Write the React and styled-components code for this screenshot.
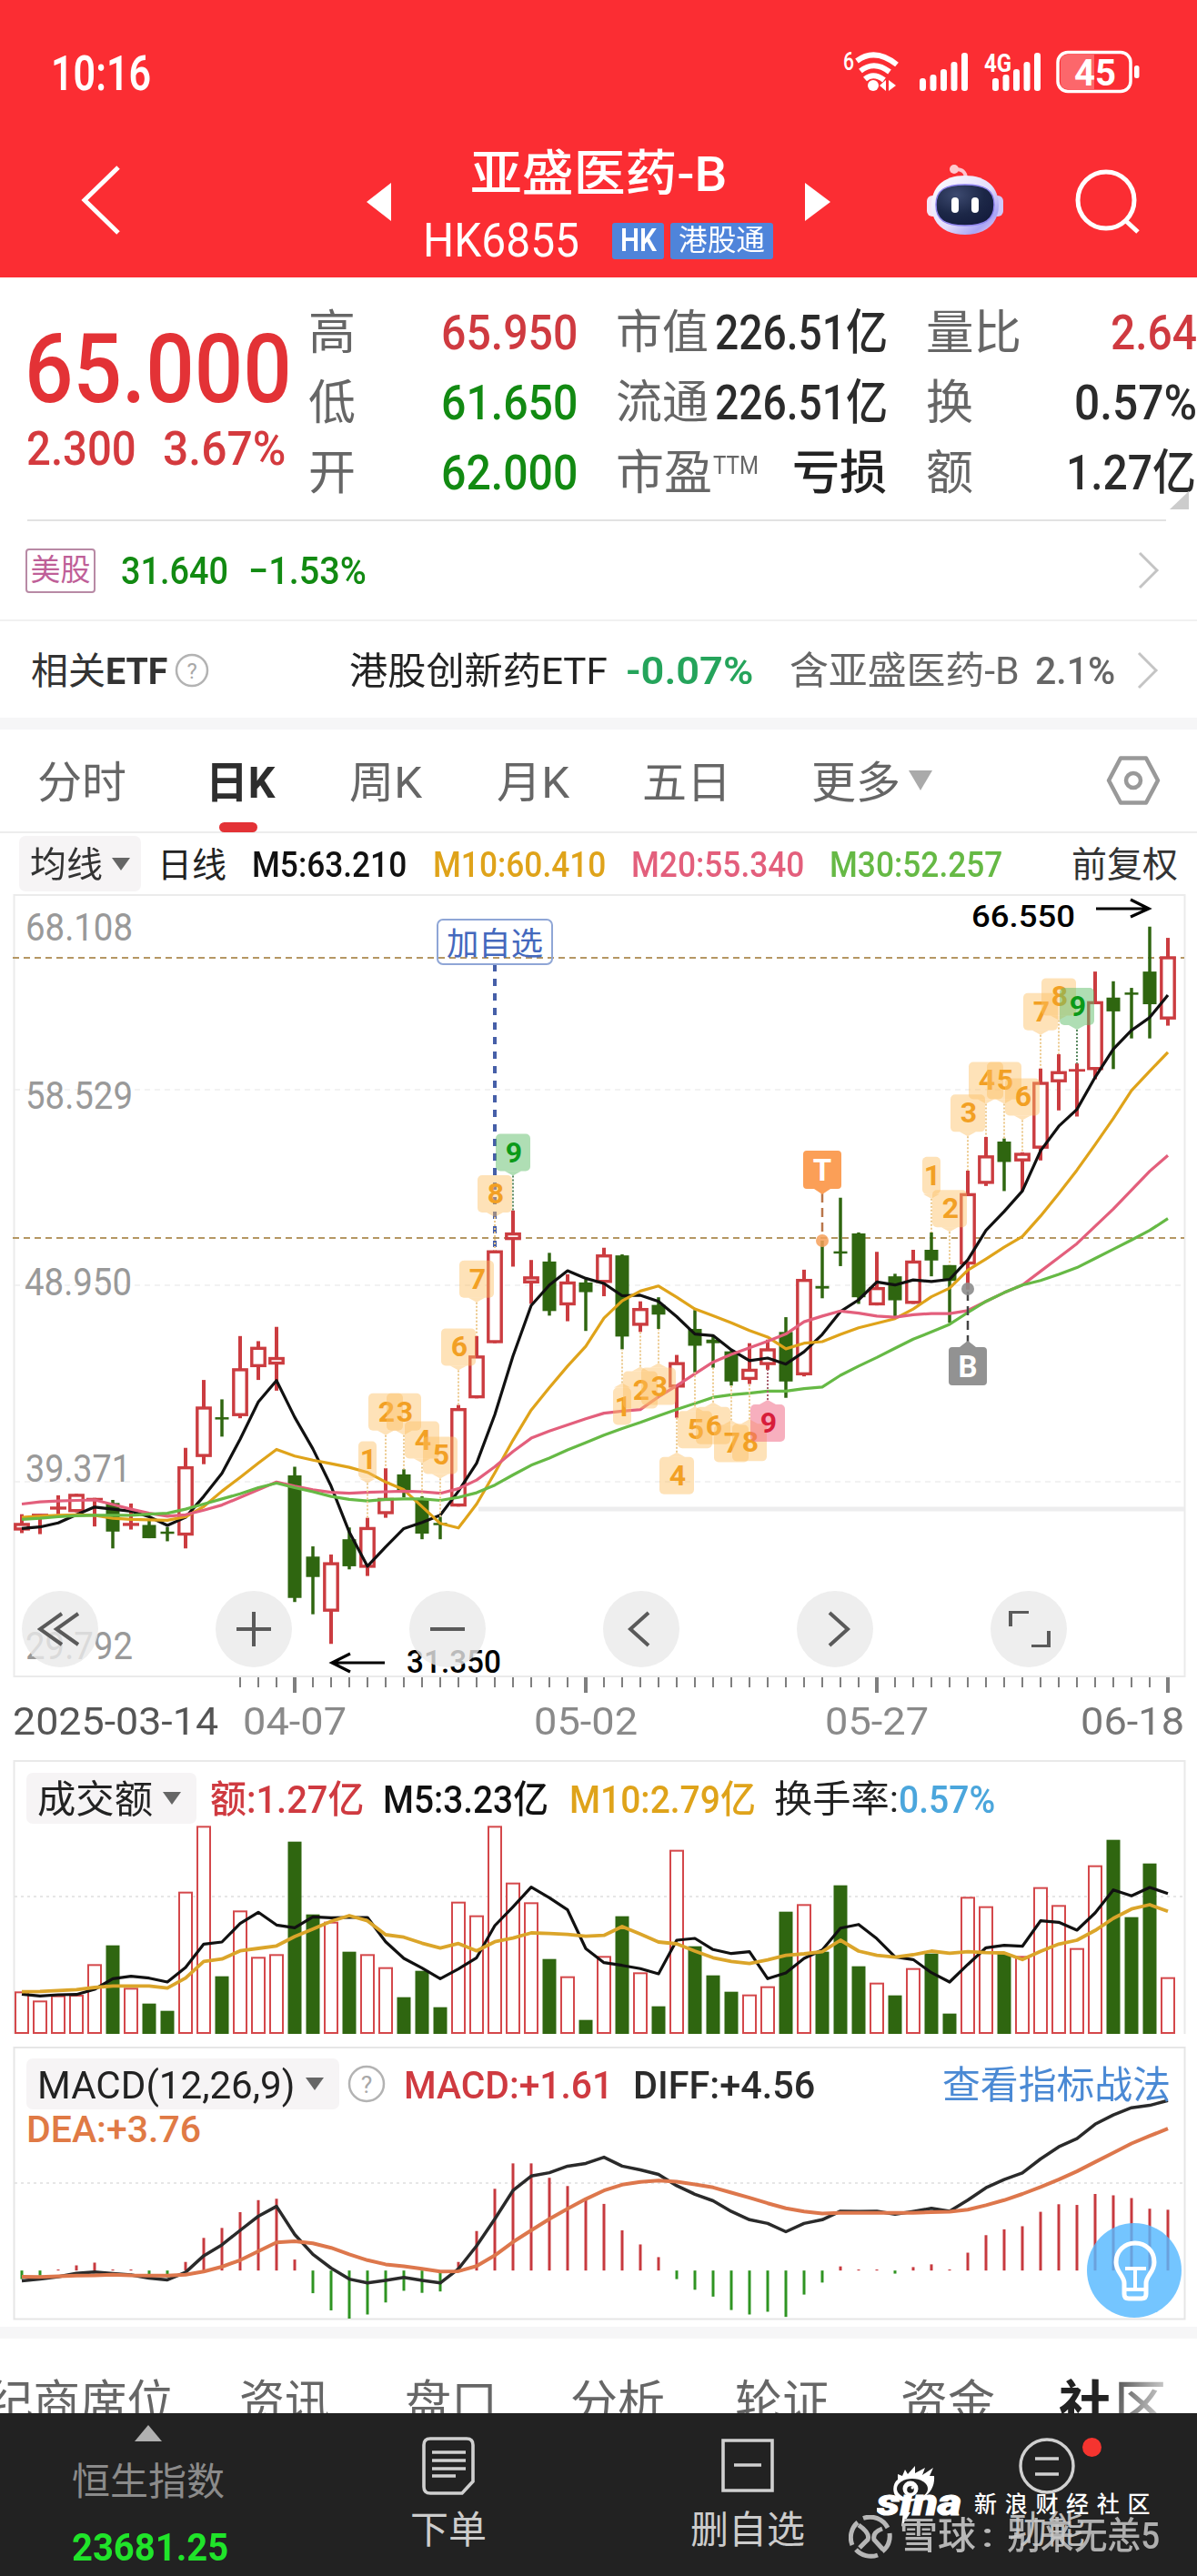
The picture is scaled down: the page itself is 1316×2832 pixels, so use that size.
import React, { useLayoutEffect, useRef, useState } from 'react';
import styled, { createGlobalStyle } from 'styled-components';

const RED = '#e33236';
const CANDLE_RED = '#cb3c40';
const CANDLE_GREEN = '#2f6610';
const GREEN = '#128a12';
const ORANGE = '#dfa31a';
const PINK = '#e35f7c';
const LIME = '#66b945';

// [high, body top, body bottom, low, direction]
const candles = [
    [1220, 1237, 1252, 1257, 'r'], [1220, 1219, 1222, 1259, 'r'], [1183, 1205, 1211, 1220, 'r'],
    [1180, 1180, 1216, 1216, 'r'], [1188, 1188, 1193, 1244, 'r'], [1192, 1198, 1254, 1287, 'g'],
    [1199, 1237, 1243, 1250, 'r'], [1233, 1241, 1267, 1267, 'g'], [1245, 1254, 1257, 1273, 'g'],
    [1090, 1126, 1262, 1287, 'r'], [957, 1009, 1108, 1122, 'r'], [995, 1030, 1033, 1068, 'g'],
    [871, 934, 1028, 1032, 'r'], [881, 892, 932, 957, 'r'], [853, 912, 927, 978, 'r'],
    [1127, 1144, 1384, 1392, 'g'], [1283, 1303, 1343, 1416, 'g'], [1299, 1314, 1411, 1474, 'r'],
    [1246, 1269, 1322, 1328, 'g'], [1227, 1245, 1325, 1341, 'r'], [1130, 1188, 1220, 1227, 'r'],
    [1132, 1142, 1175, 1187, 'g'], [1185, 1189, 1258, 1269, 'g'], [1225, 1237, 1241, 1269, 'g'],
    [1006, 1012, 1205, 1205, 'r'], [871, 909, 993, 993, 'r'], [703, 703, 885, 885, 'r'],
    [625, 668, 683, 735, 'r'], [722, 754, 768, 808, 'r'], [708, 725, 822, 831, 'g'],
    [750, 764, 811, 842, 'r'], [760, 766, 785, 861, 'g'], [698, 711, 767, 793, 'r'],
    [711, 713, 872, 897, 'g'], [803, 816, 851, 863, 'r'], [795, 810, 829, 857, 'g'],
    [908, 922, 972, 1031, 'r'], [820, 857, 890, 942, 'g'], [871, 878, 885, 933, 'g'],
    [900, 901, 960, 968, 'g'], [885, 935, 957, 965, 'r'], [878, 895, 928, 937, 'r'],
    [834, 863, 960, 992, 'g'], [741, 759, 948, 950, 'r'], [684, 773, 778, 797, 'g'],
    [600, 705, 709, 734, 'g'], [668, 670, 795, 808, 'g'], [706, 775, 811, 811, 'r'],
    [749, 754, 801, 834, 'g'], [702, 723, 808, 808, 'r'], [668, 702, 723, 754, 'g'],
    [732, 732, 763, 845, 'g'], [547, 591, 731, 780, 'r'], [481, 517, 573, 577, 'r'],
    [484, 490, 530, 587, 'g'], [511, 512, 529, 587, 'r'], [347, 373, 504, 527, 'r'],
    [319, 352, 374, 429, 'r'], [337, 348, 353, 441, 'r'], [157, 215, 350, 368, 'r'],
    [176, 208, 235, 348, 'g'], [189, 198, 201, 288, 'g'], [69, 157, 221, 288, 'g'],
    [91, 127, 251, 263, 'r'],
];

const ma5 = [1248, 1245, 1237, 1221, 1206, 1210, 1214, 1225, 1242, 1226, 1185, 1140, 1073, 1000, 958, 1030, 1092, 1165, 1255, 1322, 1284, 1248, 1236, 1222, 1175, 1120, 1025, 910, 811, 771, 743, 758, 768, 792, 791, 803, 833, 867, 870, 898, 919, 914, 926, 902, 868, 823, 800, 765, 771, 761, 764, 760, 722, 664, 627, 587, 508, 460, 427, 364, 309, 272, 247, 203];
const ma10 = [1226, 1224, 1222, 1221, 1222, 1228, 1230, 1231, 1232, 1225, 1205, 1175, 1148, 1120, 1093, 1106, 1114, 1121, 1128, 1138, 1157, 1172, 1205, 1238, 1247, 1200, 1139, 1075, 1016, 972, 930, 891, 836, 802, 783, 773, 795, 818, 831, 845, 860, 873, 896, 885, 882, 868, 855, 846, 837, 818, 794, 777, 742, 720, 697, 676, 636, 592, 546, 496, 445, 390, 352, 315];
const ma20 = [1200, 1196, 1194, 1193, 1192, 1201, 1210, 1218, 1224, 1221, 1212, 1202, 1187, 1172, 1157, 1165, 1172, 1177, 1179, 1177, 1176, 1175, 1176, 1179, 1170, 1153, 1127, 1097, 1071, 1057, 1045, 1033, 1022, 1018, 1015, 990, 968, 945, 922, 907, 894, 881, 867, 843, 832, 822, 826, 832, 834, 829, 827, 827, 821, 803, 786, 771, 744, 717, 690, 656, 622, 585, 548, 517];
const ma30 = [1230, 1228, 1225, 1223, 1222, 1222, 1222, 1220, 1218, 1210, 1200, 1190, 1180, 1168, 1159, 1168, 1176, 1185, 1191, 1194, 1191, 1190, 1190, 1193, 1187, 1178, 1163, 1143, 1124, 1110, 1094, 1080, 1065, 1052, 1040, 1027, 1015, 1003, 991, 986, 983, 979, 979, 974, 971, 948, 930, 913, 895, 877, 863, 848, 825, 803, 786, 771, 762, 750, 737, 719, 701, 683, 664, 641];

// [candle index, label, tag top, dotted line end, 'above' | 'below', tone]
const tags = [
    [19, '1', 1077, 1227, 'above'], [20, '2', 983, 1130, 'above'], [21, '3', 983, 1132, 'above'],
    [22, '4', 1038, 1185, 'above'], [23, '5', 1068, 1225, 'above'], [24, '6', 856, 1006, 'above'],
    [25, '7', 723, 871, 'above'], [26, '8', 556, 703, 'above'], [27, '9', 475, 625, 'above', 'green'],
    [33, '1', 972, 897, 'below'], [34, '2', 940, 863, 'below'], [35, '3', 933, 857, 'below'],
    [36, '4', 1108, 1031, 'below'], [37, '5', 1018, 942, 'below'], [38, '6', 1010, 933, 'below'],
    [39, '7', 1045, 968, 'below'], [40, '8', 1043, 965, 'below'], [41, '9', 1005, 937, 'below', 'red'],
    [50, '1', 520, 668, 'above'], [51, '2', 585, 732, 'above'], [52, '3', 398, 547, 'above'],
    [53, '4', 334, 481, 'above'], [54, '5', 334, 484, 'above'], [55, '6', 366, 511, 'above'],
    [56, '7', 199, 347, 'above'], [57, '8', 170, 319, 'above'], [58, '9', 189, 337, 'above', 'green'],
];

const tones = {
    amber: { bg: 'rgba(253,190,98,0.45)', fg: '#f2a024', line: '#ecc98d' },
    green: { bg: 'rgba(95,190,105,0.5)', fg: '#0b9a18', line: '#5b8a62' },
    red: { bg: 'rgba(240,95,125,0.5)', fg: '#d81e3a', line: '#a8606f' },
};

const volumes = [1232, 1262, 1245, 1243, 1142, 1077, 1220, 1269, 1293, 903, 686, 1179, 965, 1118, 1109, 735, 975, 1002, 1098, 1109, 1152, 1248, 1161, 1281, 936, 981, 686, 873, 938, 1122, 1182, 1323, 1115, 981, 1169, 1278, 765, 1080, 1176, 1230, 1242, 1215, 966, 944, 1098, 879, 1146, 1203, 1242, 1155, 1104, 1302, 920, 951, 1105, 1115, 888, 947, 1089, 816, 729, 984, 807, 1185];
const greenVolumes = [5, 7, 8, 11, 15, 16, 18, 21, 22, 23, 29, 31, 33, 35, 37, 38, 39, 42, 44, 45, 46, 48, 50, 51, 54, 60, 61, 62];
const vol5 = [1238, 1244, 1240, 1239, 1222, 1187, 1179, 1185, 1198, 1150, 1073, 1066, 1005, 968, 1010, 1019, 983, 986, 985, 985, 1065, 1120, 1152, 1187, 1155, 1118, 1012, 950, 885, 920, 960, 1088, 1134, 1143, 1154, 1171, 1060, 1054, 1091, 1104, 1098, 1187, 1168, 1120, 1092, 1020, 1008, 1055, 1115, 1124, 1167, 1198, 1140, 1085, 1077, 1080, 996, 1001, 1027, 970, 894, 914, 886, 906];
const vol10 = [1230, 1229, 1226, 1223, 1216, 1211, 1211, 1211, 1218, 1185, 1130, 1122, 1095, 1087, 1079, 1048, 1023, 998, 979, 996, 1042, 1050, 1070, 1086, 1071, 1095, 1065, 1053, 1036, 1038, 1041, 1047, 1044, 1015, 1040, 1066, 1072, 1096, 1118, 1130, 1137, 1125, 1110, 1105, 1098, 1060, 1096, 1110, 1116, 1108, 1096, 1103, 1098, 1101, 1102, 1124, 1097, 1073, 1060, 1028, 988, 957, 943, 965];

const macdBars = [705, 695, 677, 665, 657, 677, 677, 700, 700, 655, 585, 556, 510, 475, 471, 648, 746, 796, 820, 808, 773, 739, 745, 741, 655, 565, 442, 368, 368, 410, 434, 470, 486, 563, 604, 641, 705, 736, 756, 795, 808, 800, 815, 750, 715, 668, 677, 677, 689, 670, 662, 677, 628, 577, 560, 551, 509, 487, 489, 457, 461, 469, 500, 503];
const diff = [710, 705, 698, 688, 684, 689, 693, 702, 707, 685, 637, 605, 563, 522, 493, 575, 633, 673, 705, 716, 709, 700, 709, 716, 675, 608, 530, 447, 405, 395, 376, 368, 350, 376, 387, 400, 433, 458, 477, 508, 532, 543, 567, 543, 532, 507, 508, 507, 516, 508, 499, 507, 475, 439, 415, 396, 355, 320, 296, 254, 227, 206, 199, 185];
const dea = [698, 699, 697, 695, 694, 692, 694, 695, 695, 692, 683, 669, 650, 624, 598, 595, 601, 614, 633, 650, 662, 668, 675, 683, 682, 667, 636, 597, 563, 530, 500, 472, 447, 430, 422, 418, 421, 429, 438, 453, 468, 484, 499, 508, 514, 512, 512, 512, 512, 512, 510, 509, 503, 490, 475, 457, 437, 415, 391, 364, 337, 310, 288, 267];

// level -> px inside each chart
const px = (i) => 24 + i * 20;
const priceY = (v) => (v * 880) / 1568;
const volY = (v) => (v - 466) / 3;
const macdY = (v) => (v - 28) / 2.6486;
const toPoints = (list, scale) => list.map((v, i) => `${px(i)},${scale(v).toFixed(1)}`).join(' ');

// Squeezes or stretches a label to the width of its column
function Fit({ w, children, ...rest }) {
    const ref = useRef(null);
    const [ratio, setRatio] = useState(1);

    useLayoutEffect(() => {
        setRatio(w / ref.current.offsetWidth);
    }, [w, children]);

    return (
        <Label $w={w} {...rest}>
            <span ref={ref} style={{ transform: `scaleX(${ratio})` }}>{children}</span>
        </Label>
    );
}

function ChartText({ x, y, w, size = 42, fill = '#999', weight = 400, children }) {
    return (
        <text x={x} y={y} fontSize={size} fill={fill} fontWeight={weight} textLength={w} lengthAdjust="spacingAndGlyphs">
            {children}
        </text>
    );
}

function SignalBars({ offset }) {
    return [85, 81, 75, 67, 57].map((top, i) => (
        <rect key={top} x={offset + i * 11.5} y={top - 50} width="7" height={99 - top} rx="3.2" fill="#fff" />
    ));
}

function StatusIcons() {
    return (
        <svg width="336" height="60" viewBox="0 0 336 60">
            <text x="1" y="26" fontSize="27" fontWeight="500" fill="#fff" textLength="12" lengthAdjust="spacingAndGlyphs">6</text>
            <g fill="none" stroke="#fff" strokeWidth="6">
                <path d="M16 16 Q36 1 60 20" />
                <path d="M20 27 Q35 15 52 28" />
                <path d="M25 36 Q34 28 46 37" />
            </g>
            <circle cx="34" cy="43" r="6" fill="#fff" />
            <path d="M41 43 L48 37 V49Z M51 37 L59 43 L51 49Z" fill="#fff" />
            <SignalBars offset={85} />
            <text x="156" y="28" fontSize="28" fontWeight="700" fill="#fff" textLength="30" lengthAdjust="spacingAndGlyphs">4G</text>
            <SignalBars offset={165} />
            <rect x="237" y="6.500" width="80" height="43" rx="11" fill="none" stroke="#fff" strokeWidth="3.500" />
            <path d="M248 9 H277 V47 H248 Q240 47 240 39 V17 Q240 9 248 9Z" fill="rgba(255,255,255,0.28)" />
            <text x="255" y="43" fontSize="40" fontWeight="700" fill="#fff" textLength="46" lengthAdjust="spacingAndGlyphs">45</text>
            <rect x="321" y="21" width="5.500" height="14" rx="2.500" fill="#fff" />
        </svg>
    );
}

function Robot() {
    return (
        <svg width="90" height="84" viewBox="0 0 90 84">
            <defs>
                <linearGradient id="shell" x1="0" y1="0" x2="1" y2="1">
                    <stop offset="0" stopColor="#fff" />
                    <stop offset="0.55" stopColor="#e3dcfb" />
                    <stop offset="0.8" stopColor="#a9a5f5" />
                    <stop offset="1" stopColor="#fbd5ea" />
                </linearGradient>
                <radialGradient id="visor" cx="0.35" cy="0.25" r="0.8">
                    <stop offset="0" stopColor="#3d4a70" />
                    <stop offset="0.6" stopColor="#1c2747" />
                    <stop offset="1" stopColor="#141c3d" />
                </radialGradient>
            </defs>
            <path d="M33 6 Q46 5 46 17" fill="none" stroke="#fdc5cf" strokeWidth="4" />
            <circle cx="33" cy="6" r="5" fill="#ffc9cf" />
            <rect x="3" y="35" width="14" height="23" rx="6" fill="#f6e4f6" />
            <rect x="73" y="35" width="14" height="23" rx="6" fill="#cfc8fa" />
            <path d="M45 13 C69 13 82 26 82 46 C82 66 67 78 45 78 C23 78 8 66 8 46 C8 26 21 13 45 13Z" fill="url(#shell)" />
            <path d="M45 23 C67 23 77 29 77 45 C77 62 66 68 45 68 C23 68 13 62 13 45 C13 29 23 23 45 23Z" fill="url(#visor)" stroke="#8f83ee" strokeWidth="1.500" />
            <rect x="30" y="37" width="8" height="17" rx="4" fill="#fff" />
            <rect x="52" y="37" width="8" height="17" rx="4" fill="#fff" />
        </svg>
    );
}

function Chevron() {
    return (
        <svg width="24" height="42" viewBox="0 0 24 42" fill="none" stroke="#c4c4c4" strokeWidth="3">
            <path d="M2 2 L21 21 L2 40" />
        </svg>
    );
}

function Help({ r }) {
    return (
        <svg width="44" height="44" viewBox="0 0 44 44">
            <circle cx="22" cy="22" r={r} fill="none" stroke="#b3b3b3" strokeWidth="2.500" />
            <text x="22" y={22 + r * 0.5} fontSize={r * 1.4} fill="#a8a8a8" textAnchor="middle">?</text>
        </svg>
    );
}

function Tag({ index, label, top, end, side, tone = 'amber' }) {
    const { bg, fg, line } = tones[tone];
    const width = label === '1' ? 20 : 38;
    const x = px(index);
    const y = priceY(top);
    const bottom = y + 41;
    const pointer = side === 'above'
        ? `M${x - 9} ${bottom} L${x} ${bottom + 5} L${x + 9} ${bottom}Z`
        : `M${x - 9} ${y} L${x} ${y - 5} L${x + 9} ${y}Z`;

    return (
        <g>
            <line x1={x} x2={x} y1={side === 'above' ? bottom + 5 : y - 5} y2={priceY(end)} stroke={line} strokeWidth="2" strokeDasharray="2 2" />
            <rect x={x - width / 2} y={y} width={width} height="41" rx="5" fill={bg} />
            <path d={pointer} fill={bg} />
            <text x={x + 1} y={y + 31} fontSize="32" fontWeight="700" fill={fg} textAnchor="middle">{label}</text>
        </g>
    );
}

function PriceChart() {
    return (
        <ChartSvg width="1316" height="880" viewBox="0 0 1316 880">
            <rect x="15.500" y="4" width="1287" height="859" fill="none" stroke="#ebebeb" strokeWidth="2" />
            {[218, 433, 649].map((y) => (
                <line key={y} x1="16" x2="1302" y1={y} y2={y} stroke="#eee" strokeWidth="1.500" strokeDasharray="6 5" />
            ))}
            <line x1="526" x2="1302" y1="679" y2="679" stroke="#ededee" strokeWidth="5" />
            {[73, 381].map((y) => (
                <line key={y} x1="14" x2="1302" y1={y} y2={y} stroke="#b59763" strokeWidth="2" strokeDasharray="7 5" />
            ))}

            <ChartText x={28} y={54} w={118}>68.108</ChartText>
            <ChartText x={28} y={239} w={118}>58.529</ChartText>
            <ChartText x={27} y={444} w={118}>48.950</ChartText>
            <ChartText x={28} y={649} w={116}>39.371</ChartText>
            <ChartText x={28} y={844} w={118}>29.792</ChartText>

            <line x1="544" x2="544" y1="80" y2="391" stroke="#465fa8" strokeWidth="4" strokeDasharray="8 8" />

            {candles.map(([high, top, bottom, low, dir], i) => {
                const up = dir === 'r';
                const color = up ? CANDLE_RED : CANDLE_GREEN;
                const x = px(i);
                const flat = bottom - top < 9;
                const y = priceY(top);
                const h = Math.max(priceY(bottom) - y, 2.5);
                return (
                    <g key={i}>
                        <line x1={x} x2={x} y1={priceY(high)} y2={priceY(low)} stroke={color} strokeWidth={up ? 4 : 3.5} />
                        {up && !flat
                            ? <rect x={x - 7.2} y={y + 1.7} width="14.400" height={Math.max(h - 3.4, 3)} fill="#fff" stroke={color} strokeWidth="3.400" />
                            : <rect x={x - (up ? 9 : 7.5)} y={y} width={up ? 18 : 15} height={h} fill={color} />}
                    </g>
                );
            })}

            <g fill="none" strokeWidth="3.200" strokeLinejoin="round">
                <polyline points={toPoints(ma5, priceY)} stroke="#111" />
                <polyline points={toPoints(ma10, priceY)} stroke={ORANGE} />
                <polyline points={toPoints(ma20, priceY)} stroke={PINK} />
                <polyline points={toPoints(ma30, priceY)} stroke={LIME} />
            </g>

            {tags.map(([index, label, top, end, side, tone]) => (
                <Tag key={`${index}${label}`} index={index} label={label} top={top} end={end} side={side} tone={tone} />
            ))}

            <rect x="481" y="31" width="126" height="49" rx="6" fill="none" stroke="#8fa6d6" strokeWidth="2" />
            <ChartText x={491} y={70} w={106} size={35} fill="#4468bd">加自选</ChartText>

            <line x1="904" x2="904" y1="332" y2="378" stroke="#b9764a" strokeWidth="2.500" strokeDasharray="10 6" />
            <circle cx="904" cy="384" r="7" fill="#f6a05a" opacity="0.85" />
            <path d="M887 285 H921 Q925 285 925 289 V323 Q925 327 921 327 H913 L904 333 L895 327 H887 Q883 327 883 323 V289 Q883 285 887 285Z" fill="#fb9f57" />
            <text x="904" y="318" fontSize="33" fontWeight="700" fill="#fff" textAnchor="middle">T</text>

            <line x1="1064" x2="1064" y1="440" y2="496" stroke="#444" strokeWidth="2.500" strokeDasharray="10 6" />
            <circle cx="1064" cy="437" r="7" fill="#8c8c8c" opacity="0.9" />
            <path d="M1047 501 H1055 L1064 494 L1073 501 H1081 Q1085 501 1085 505 V539 Q1085 543 1081 543 H1047 Q1043 543 1043 539 V505 Q1043 501 1047 501Z" fill="#929292" />
            <text x="1064" y="534" fontSize="33" fontWeight="700" fill="#fff" textAnchor="middle">B</text>

            <ChartText x={1068} y={39} w={114} size={34} fill="#000" weight={500}>66.550</ChartText>
            <path d="M1205 19 H1262 M1243 9 L1263 19 L1243 28" fill="none" stroke="#000" strokeWidth="3.200" />
            <ChartText x={447} y={859} w={104} size={35} fill="#000" weight={500}>31.350</ChartText>
            <path d="M423 848 H365 M385 838 L365 848 L385 858" fill="none" stroke="#000" strokeWidth="3.200" />

            {candles.map((_, i) => i > 11 && (
                <line key={i} x1={px(i)} x2={px(i)} y1="864" y2={(i - 15) % 16 === 0 ? 881 : 875} stroke="#7f7f7f" strokeWidth={(i - 15) % 16 === 0 ? 4 : 2} />
            ))}
        </ChartSvg>
    );
}

function VolumeChart() {
    return (
        <ChartSvg width="1316" height="304" viewBox="0 0 1316 304">
            <path d="M15.500 301 V1 H1302.500 V301" fill="none" stroke="#e9e9e9" strokeWidth="2" />
            <line x1="16" x2="1302" y1="150" y2="150" stroke="#dedede" strokeWidth="1.500" strokeDasharray="3 4" />
            {volumes.map((v, i) => {
                const green = greenVolumes.includes(i);
                const y = volY(v);
                return green
                    ? <rect key={i} x={px(i) - 7.5} y={y} width="15" height={301 - y} fill={CANDLE_GREEN} />
                    : <rect key={i} x={px(i) - 7} y={y} width="14" height={300 - y} fill="#fff" stroke="#d4484b" strokeWidth="2" />;
            })}
            <g fill="none" strokeWidth="3.200" strokeLinejoin="round">
                <polyline points={toPoints(vol5, volY)} stroke="#111" />
                <polyline points={toPoints(vol10, volY)} stroke="#dba52a" strokeWidth="3.800" />
            </g>
        </ChartSvg>
    );
}

function MacdChart() {
    const zero = macdY(680);
    return (
        <ChartSvg width="1316" height="304" viewBox="0 0 1316 304">
            <rect x="15.500" y="1" width="1287" height="298.500" fill="none" stroke="#e6e6e6" strokeWidth="2" />
            <line x1="16" x2="1302" y1="150" y2="150" stroke="#dedede" strokeWidth="1.500" strokeDasharray="3 4" />
            {macdBars.map((v, i) => (
                <line key={i} x1={px(i)} x2={px(i)} y1={zero} y2={macdY(v)} stroke={v < 680 ? '#c73a3f' : '#2f9422'} strokeWidth="3" />
            ))}
            <g fill="none" strokeWidth="3.500" strokeLinejoin="round">
                <polyline points={toPoints(diff, macdY)} stroke="#2a2a2a" />
                <polyline points={toPoints(dea, macdY)} stroke="#dd774c" strokeWidth="4" />
            </g>
        </ChartSvg>
    );
}

const buttonIcons = [
    'M27 3 L3 20 L27 37 M45 3 L21 20 L45 37',
    'M6 20 H44 M25 1 V39',
    'M6 20 H44',
    'M33 2 L13 20 L33 38',
    'M19 2 L39 20 L19 38',
    'M5 17 V1 H25 M47 22 V39 H28',
];

function App() {
    return (
        <>
            <GlobalStyle />
            <Page>
                <StatusBar>
                    <Fit w={110} $size={54} $weight={600} $color="#fff">10:16</Fit>
                    <StatusIcons />
                </StatusBar>
                <Nav>
                    <Slot $gap={88}>
                        <svg width="46" height="80" viewBox="0 0 46 80" fill="none" stroke="#fff" strokeWidth="5">
                            <path d="M42 2 L5 38 L42 74" />
                        </svg>
                    </Slot>
                    <Slot $gap={269}>
                        <svg width="27" height="42"><path d="M27 0 V42 L0 21Z" fill="#fff" /></svg>
                    </Slot>
                    <Titles>
                        <TitleLine $drop={5}><Fit w={282} $size={54} $weight={500} $color="#fff">亚盛医药-B</Fit></TitleLine>
                        <TitleLine>
                            <Fit w={172} $size={51} $color="#fff">HK6855</Fit>
                            <Badge $gap={36} $w={57}><Fit w={40} $size={35} $weight={600} $color="#fff">HK</Fit></Badge>
                            <Badge $gap={7} $w={113}><Fit w={95} $size={32} $color="#fff">港股通</Fit></Badge>
                        </TitleLine>
                    </Titles>
                    <Slot $gap={0}>
                        <svg width="28" height="42"><path d="M0 0 V42 L28 21Z" fill="#fff" /></svg>
                    </Slot>
                    <Slot $gap={103}><Robot /></Slot>
                    <Slot $gap={76}>
                        <svg width="76" height="72" viewBox="0 0 76 72" fill="none" stroke="#fff" strokeWidth="5">
                            <circle cx="34" cy="34" r="31" />
                            <path d="M56 57 L69 69" />
                        </svg>
                    </Slot>
                </Nav>

                <Quote>
                    <Price>
                        <Fit w={294} $size={106} $weight={500} $color={RED}>65.000</Fit>
                        <PriceChange>
                            <Fit w={121} $size={52} $weight={500} $color="#d43a3e">2.300</Fit>
                            <Fit w={135} $gap={29} $size={52} $weight={500} $color="#d43a3e">3.67%</Fit>
                        </PriceChange>
                    </Price>
                    <Stats>
                        <StatRow>
                            <Fit w={52} $size={52} $color="#666">高</Fit>
                            <Fit w={150} $gap={94} $size={53} $weight={500} $color="#cf3a40">65.950</Fit>
                            <Fit w={102} $gap={42} $size={51} $color="#666">市值</Fit>
                            <Fit w={190} $gap={7} $size={53} $weight={500} $color="#2b2b2b">226.51亿</Fit>
                            <Fit w={105} $gap={42} $size={52} $color="#666">量比</Fit>
                            <Fit w={95} $gap={98} $size={53} $weight={500} $color="#cf3a40">2.64</Fit>
                        </StatRow>
                        <StatRow>
                            <Fit w={52} $size={52} $color="#666">低</Fit>
                            <Fit w={150} $gap={94} $size={53} $weight={500} $color={GREEN}>61.650</Fit>
                            <Fit w={102} $gap={42} $size={51} $color="#666">流通</Fit>
                            <Fit w={190} $gap={7} $size={53} $weight={500} $color="#2b2b2b">226.51亿</Fit>
                            <Fit w={52} $gap={42} $size={52} $color="#666">换</Fit>
                            <Fit w={135} $gap={111} $size={53} $weight={500} $color="#2b2b2b">0.57%</Fit>
                        </StatRow>
                        <StatRow>
                            <Fit w={52} $size={52} $color="#666">开</Fit>
                            <Fit w={150} $gap={94} $size={53} $weight={500} $color={GREEN}>62.000</Fit>
                            <Fit w={106} $gap={42} $size={52} $color="#666">市盈</Fit>
                            <Fit w={50} $gap={1} $size={28} $raise={8} $color="#666">TTM</Fit>
                            <Fit w={104} $gap={37} $size={52} $weight={500} $color="#222">亏损</Fit>
                            <Fit w={52} $gap={43} $size={52} $color="#666">额</Fit>
                            <Fit w={143} $gap={102} $size={53} $weight={500} $color="#2b2b2b">1.27亿</Fit>
                        </StatRow>
                    </Stats>
                    <Corner />
                </Quote>

                <UsRow>
                    <UsBadge><Fit w={66} $size={33} $color="#bf5f98">美股</Fit></UsBadge>
                    <Fit w={118} $gap={28} $size={42} $weight={500} $color={GREEN}>31.640</Fit>
                    <Fit w={130} $gap={22} $size={42} $weight={500} $color={GREEN}>−1.53%</Fit>
                    <Push><Chevron /></Push>
                </UsRow>

                <EtfRow>
                    <Fit w={82} $size={41} $color="#333">相关</Fit>
                    <Fit w={68} $size={41} $weight={700} $color="#333">ETF</Fit>
                    <HelpSlot $gap={5}><Help r={17} /></HelpSlot>
                    <Fit w={284} $gap={151} $size={41} $color="#222">港股创新药ETF</Fit>
                    <Fit w={140} $gap={20} $size={42} $weight={600} $color="#25a45b">-0.07%</Fit>
                    <Fit w={253} $gap={40} $size={42} $color="#666">含亚盛医药-B</Fit>
                    <Fit w={88} $gap={17} $size={42} $weight={500} $color="#666">2.1%</Fit>
                    <Push><Chevron /></Push>
                </EtfRow>
                <Divider />

                <Tabs>
                    <Fit w={98} $gap={41} $size={48} $color="#666">分时</Fit>
                    <Fit w={77} $gap={87} $size={48} $weight={700} $color="#2e2e2e">日K</Fit>
                    <Fit w={80} $gap={81} $size={48} $color="#666">周K</Fit>
                    <Fit w={80} $gap={82} $size={48} $color="#666">月K</Fit>
                    <Fit w={98} $gap={80} $size={48} $color="#666">五日</Fit>
                    <Fit w={98} $gap={88} $size={48} $color="#666">更多</Fit>
                    <Caret $gap={9} $size={13} $tall={22} $color="#aaa" />
                    <HexSlot>
                        <svg width="60" height="54" viewBox="0 0 60 54" fill="none" stroke="#999" strokeWidth="4.500" strokeLinejoin="round">
                            <path d="M16 2.500 H44 L57 27 L44 51.500 H16 L3 27Z" />
                            <circle cx="30" cy="27" r="8" />
                        </svg>
                    </HexSlot>
                    <ActiveMark />
                </Tabs>

                <Legend>
                    <Chip $w={134} $h={61}>
                        <Fit w={80} $size={39} $color="#333">均线</Fit>
                        <Caret $gap={10} $size={10} $tall={14} $color="#666" />
                    </Chip>
                    <Fit w={76} $gap={18} $size={38} $color="#222">日线</Fit>
                    <Fit w={170} $gap={28} $size={39} $weight={500} $color="#111">M5:63.210</Fit>
                    <Fit w={190} $gap={29} $size={39} $weight={500} $color={ORANGE}>M10:60.410</Fit>
                    <Fit w={190} $gap={28} $size={39} $weight={500} $color={PINK}>M20:55.340</Fit>
                    <Fit w={190} $gap={28} $size={39} $weight={500} $color={LIME}>M30:52.257</Fit>
                    <Fit w={117} $gap={76} $size={39} $color="#333">前复权</Fit>
                </Legend>

                <PricePanel>
                    <PriceChart />
                    <ChartButtons>
                        {buttonIcons.map((d) => (
                            <RoundButton key={d}>
                                <svg width="50" height="40" viewBox="0 0 50 40" fill="none" stroke="#5a5a5a" strokeWidth="4">
                                    <path d={d} />
                                </svg>
                            </RoundButton>
                        ))}
                    </ChartButtons>
                </PricePanel>

                <Dates>
                    <Fit w={226} $size={42} $color="#555">2025-03-14</Fit>
                    <Fit w={114} $gap={27} $size={42} $color="#8a8a8a">04-07</Fit>
                    <Fit w={114} $gap={206} $size={42} $color="#8a8a8a">05-02</Fit>
                    <Fit w={114} $gap={206} $size={42} $color="#8a8a8a">05-27</Fit>
                    <Fit w={114} $gap={167} $size={42} $color="#777">06-18</Fit>
                </Dates>

                <VolumePanel>
                    <VolumeChart />
                    <PanelHead $top={14}>
                        <Chip $w={187} $h={56}>
                            <Fit w={127} $size={42} $color="#222">成交额</Fit>
                            <Caret $gap={11} $size={10} $tall={14} $color="#666" />
                        </Chip>
                        <Fit w={169} $gap={15} $size={42} $weight={500} $color="#cf3a40">额:1.27亿</Fit>
                        <Fit w={182} $gap={21} $size={42} $weight={500} $color="#111">M5:3.23亿</Fit>
                        <Fit w={205} $gap={23} $size={42} $weight={500} $color={ORANGE}>M10:2.79亿</Fit>
                        <Fit w={137} $gap={20} $size={41} $color="#222">换手率:</Fit>
                        <Fit w={106} $size={42} $weight={500} $color="#4ba6dc">0.57%</Fit>
                    </PanelHead>
                </VolumePanel>

                <MacdPanel>
                    <MacdChart />
                    <PanelHead $top={13}>
                        <Chip $w={344} $h={56}>
                            <Fit w={283} $size={43} $color="#222">MACD(12,26,9)</Fit>
                            <Caret $gap={12} $size={10} $tall={14} $color="#666" />
                        </Chip>
                        <HelpSlot $gap={8}><Help r={19} /></HelpSlot>
                        <Fit w={230} $gap={19} $size={42} $weight={500} $color="#cf3a40">MACD:+1.61</Fit>
                        <Fit w={200} $gap={22} $size={42} $weight={500} $color="#2b2b2b">DIFF:+4.56</Fit>
                        <Fit w={251} $gap={140} $size={42} $color="#4a89d4">查看指标战法</Fit>
                    </PanelHead>
                    <DeaLine><Fit w={192} $size={41} $weight={500} $color="#e07a45">DEA:+3.76</Fit></DeaLine>
                    <BulbButton>
                        <svg width="104" height="104" viewBox="0 0 104 104" fill="none" stroke="#fff" strokeWidth="5" strokeLinejoin="round">
                            <path d="M41 78 V66 C41 58 32 54 32 43 C32 31 41 22 53 22 C65 22 74 31 74 43 C74 54 65 58 65 66 V78 Q65 83 60 83 H46 Q41 83 41 78Z" />
                            <path d="M41 73 H65 M53 73 V50 M42 50 H65" strokeWidth="4" />
                        </svg>
                    </BulbButton>
                </MacdPanel>
                <Divider />

                <SectionTabs>
                    <Fit w={206} $gap={-15} $size={51} $color="#666">纪商席位</Fit>
                    <Fit w={100} $gap={72} $size={51} $color="#666">资讯</Fit>
                    <Fit w={102} $gap={82} $size={51} $color="#666">盘口</Fit>
                    <Fit w={104} $gap={80} $size={51} $color="#666">分析</Fit>
                    <Fit w={104} $gap={77} $size={51} $color="#666">轮证</Fit>
                    <Fit w={104} $gap={78} $size={51} $color="#666">资金</Fit>
                    <Fit w={58} $gap={70} $size={58} $weight={700} $color="#222">社</Fit>
                    <FadedTab>区</FadedTab>
                </SectionTabs>

                <BottomBar>
                    <IndexCell>
                        <UpCaret />
                        <Fit w={168} $size={42} $color="#8b8b8b">恒生指数</Fit>
                        <Fit w={172} $size={43} $weight={700} $color="#20e42a">23681.25</Fit>
                    </IndexCell>
                    <ActionCell $left={430} $w={126}>
                        <svg width="60" height="66" viewBox="0 0 60 66" fill="none" stroke="#d0d0d0" strokeWidth="3.600">
                            <path d="M10 3 H50 Q57 3 57 10 V50 L45 63 H10 Q3 63 3 56 V10 Q3 3 10 3Z M12 18 H49 M12 27 H49 M12 36 H49 M12 44 H38" />
                        </svg>
                        <Fit w={84} $size={42} $color="#ccc">下单</Fit>
                    </ActionCell>
                    <ActionCell $left={759} $w={126}>
                        <svg width="60" height="66" viewBox="0 0 60 66" fill="none" stroke="#d0d0d0" strokeWidth="3.600">
                            <path d="M3 5 H57 V60 H3Z M15 32 H45" />
                        </svg>
                        <Fit w={126} $size={42} $color="#ccc">删自选</Fit>
                    </ActionCell>
                    <ActionCell $left={1088} $w={126}>
                        <svg width="62" height="66" viewBox="0 0 62 66" fill="none" stroke="#d0d0d0" strokeWidth="3.400">
                            <circle cx="31" cy="33" r="29" />
                            <path d="M18 25 H44 M18 42 H44" />
                        </svg>
                        <Fit w={84} $size={42} $color="#bbb">功能</Fit>
                        <RedDot />
                    </ActionCell>
                    <SinaMark>
                        <svg width="100" height="74" viewBox="0 0 100 74">
                            <path d="M24 38 C16 32 17 20 23 16 L23 10 L28 12 L31 5 L34 10 L42 1 L42 9 L53 3 L50 11 L62 3 L58 12 L63 12 C64 24 58 33 48 37 C40 41 30 41 24 38Z" fill="#fff" />
                            <ellipse cx="39" cy="26" rx="17" ry="11" fill="#222" />
                            <circle cx="37" cy="26" r="8.500" fill="#fff" />
                            <circle cx="37" cy="27" r="3.800" fill="#222" />
                            <circle cx="39" cy="25" r="1.500" fill="#fff" />
                            <text x="0" y="55" fontSize="40" fontWeight="900" fontStyle="italic" fill="#fff" stroke="#fff" textLength="93" lengthAdjust="spacingAndGlyphs">sına</text>
                            <path d="M29 52 H37 L27 68 Z" fill="#fff" />
                        </svg>
                        <SinaText>新浪财经社区</SinaText>
                    </SinaMark>
                    <XueqiuMark>
                        <svg width="48" height="48" viewBox="0 0 48 48" fill="none" stroke="#b7b7b7" strokeWidth="5">
                            <path d="M16 3.500 A22 22 0 0 1 43 14 M45 20 A22 22 0 0 1 37 40 M32 44 A22 22 0 0 1 8 38 M4 33 A22 22 0 0 1 10 8" />
                            <path d="M11 11 Q24 20 21 27 L12 36 M37 15 Q26 19 28 27 L38 38" />
                        </svg>
                        <Fit w={84} $gap={8} $size={41} $weight={500} $color="#b7b7b7">雪球</Fit>
                        <Fit w={14} $gap={6} $size={36} $weight={500} $color="#b7b7b7">:</Fit>
                        <Fit w={168} $gap={14} $size={41} $weight={500} $color="rgba(200,200,200,0.85)">别来无恙5</Fit>
                    </XueqiuMark>
                </BottomBar>
            </Page>
        </>
    );
}

export default App;

const GlobalStyle = createGlobalStyle`
   body {
    margin: 0;
    background: #fff;
    font-family: Roboto, "Noto Sans CJK SC", sans-serif;
   }

   svg {
    display: block;
    flex: none;
    font-family: Roboto, "Noto Sans CJK SC", sans-serif;
   }
`

const Page = styled.div`
   width: 1316px;
   height: 2832px;
   display: flex;
   flex-direction: column;
   overflow: hidden;
   background: #fff;
`

const Label = styled.span`
   flex: none;
   display: block;
   width: ${(p) => p.$w}px;
   margin-left: ${(p) => p.$gap || 0}px;
   padding-bottom: ${(p) => (p.$raise ? p.$raise * 2 : 0)}px;
   font-size: ${(p) => p.$size}px;
   font-weight: ${(p) => p.$weight || 400};
   line-height: 1.1;
   color: ${(p) => p.$color};
   white-space: nowrap;

   span {
    display: inline-block;
    transform-origin: 0 50%;
   }
`

const StatusBar = styled.div`
   flex: none;
   height: 151px;
   box-sizing: border-box;
   padding: 10px 54px 0 56px;
   display: flex;
   align-items: center;
   justify-content: space-between;
   background: #fb2d33;
`

const Nav = styled.div`
   flex: none;
   height: 154px;
   display: flex;
   align-items: flex-start;
   background: #fb2d33;
`

const Slot = styled.div`
   height: 141px;
   margin-left: ${(p) => p.$gap}px;
   display: flex;
   align-items: center;
`

const Titles = styled.div`
   width: 455px;
`

const TitleLine = styled.div`
   height: 76px;
   box-sizing: border-box;
   padding-top: ${(p) => p.$drop || 0}px;
   display: flex;
   align-items: center;
   justify-content: center;
`

const Badge = styled.div`
   width: ${(p) => p.$w}px;
   height: 40px;
   margin-left: ${(p) => p.$gap}px;
   display: flex;
   align-items: center;
   justify-content: center;
   border-radius: 3px;
   background: #4f84da;
`

const Quote = styled.div`
   position: relative;
   flex: none;
   height: 268px;
   box-sizing: border-box;
   padding: 23px 0 0 27px;
   display: flex;
   overflow: hidden;

   &::after {
    content: '';
    position: absolute;
    left: 30px;
    right: 34px;
    bottom: 0;
    height: 2px;
    background: #e2e2e2;
   }
`

const Price = styled.div`
   width: 313px;
   padding-top: 20px;
`

const PriceChange = styled.div`
   display: flex;
   padding-left: 2px;
`

const Stats = styled.div`
   flex: none;
`

const StatRow = styled.div`
   height: 77px;
   display: flex;
   align-items: center;
`

const Corner = styled.div`
   position: absolute;
   right: 9px;
   bottom: 13px;
   border-left: 21px solid transparent;
   border-bottom: 20px solid #ccc;
`

const UsRow = styled.div`
   flex: none;
   height: 110px;
   box-sizing: border-box;
   padding: 0 41px 0 28px;
   display: flex;
   align-items: center;
   border-bottom: 2px solid #f1f1f1;

   > span {
    padding-top: 3px;
   }
`

const UsBadge = styled.div`
   width: 77px;
   height: 49px;
   box-sizing: border-box;
   display: flex;
   align-items: center;
   justify-content: center;
   border: 2px solid #b88aa5;
   border-radius: 4px;
`

const Push = styled.div`
   margin-left: auto;
`

const EtfRow = styled.div`
   flex: none;
   height: 106px;
   box-sizing: border-box;
   padding: 2px 42px 0 34px;
   display: flex;
   align-items: center;

   > span {
    padding-top: 3px;
   }
`

const Divider = styled.div`
   flex: none;
   height: 13px;
   background: #f6f6f7;
`

const Tabs = styled.div`
   position: relative;
   flex: none;
   height: 114px;
   box-sizing: border-box;
   display: flex;
   align-items: center;
   border-bottom: 2px solid #ededed;

   > span {
    padding-top: 6px;
   }
`

const Caret = styled.i`
   margin-left: ${(p) => p.$gap}px;
   border: ${(p) => p.$size}px solid transparent;
   border-top: ${(p) => p.$tall}px solid ${(p) => p.$color};
   border-bottom: 0;
`

const HexSlot = styled.div`
   margin-left: auto;
   margin-right: 40px;
`

const ActiveMark = styled.i`
   position: absolute;
   left: 241px;
   bottom: -1px;
   width: 42px;
   height: 11px;
   border-radius: 6px;
   background: ${RED};
`

const Legend = styled.div`
   flex: none;
   height: 64px;
   box-sizing: border-box;
   padding: 3px 0 0 21px;
   display: flex;
   align-items: center;

   span {
    padding-top: 2px;
   }
`

const Chip = styled.div`
   flex: none;
   width: ${(p) => p.$w}px;
   height: ${(p) => p.$h}px;
   box-sizing: border-box;
   padding-left: 12px;
   display: flex;
   align-items: center;
   border-radius: 7px;
   background: #f6f4f5;
`

const ChartSvg = styled.svg`
   overflow: visible;
`

const PricePanel = styled.div`
   position: relative;
   flex: none;
   height: 880px;
`

const ChartButtons = styled.div`
   position: absolute;
   left: 24px;
   top: 769px;
   display: flex;
   gap: 129px;
`

const RoundButton = styled.div`
   width: 84px;
   height: 84px;
   display: flex;
   align-items: center;
   justify-content: center;
   border-radius: 50%;
   background: rgba(234, 234, 234, 0.8);
`

const Dates = styled.div`
   flex: none;
   height: 75px;
   box-sizing: border-box;
   padding: 0 0 9px 14px;
   display: flex;
   align-items: center;
`

const VolumePanel = styled.div`
   position: relative;
   flex: none;
   height: 315px;
`

const MacdPanel = styled.div`
   position: relative;
   flex: none;
   height: 308px;
`

const PanelHead = styled.div`
   position: absolute;
   left: 29px;
   top: ${(p) => p.$top}px;
   display: flex;
   align-items: center;

   span {
    padding-top: 2px;
   }
`

const HelpSlot = styled.div`
   margin-left: ${(p) => p.$gap}px;
`

const DeaLine = styled.div`
   position: absolute;
   left: 29px;
   top: 69px;
`

const BulbButton = styled.div`
   position: absolute;
   right: 17px;
   top: 194px;
   width: 104px;
   height: 104px;
   border-radius: 50%;
   background: rgba(86, 184, 255, 0.82);
`

const SectionTabs = styled.div`
   flex: none;
   height: 82px;
   box-sizing: border-box;
   padding-top: 43px;
   display: flex;
   align-items: flex-start;
   overflow: hidden;
`

const FadedTab = styled.span`
   margin-left: 3px;
   font-size: 58px;
   line-height: 1.1;
   font-weight: 500;
   color: transparent;
   background: linear-gradient(100deg, #555 5%, #aaa 60%, #ddd);
   background-clip: text;
`

const BottomBar = styled.div`
   position: relative;
   flex: none;
   height: 179px;
   display: flex;
   background: #222;
`

const IndexCell = styled.div`
   width: 330px;
   box-sizing: border-box;
   padding: 13px 0 0 79px;
   display: flex;
   flex-direction: column;
   gap: 25px;

   > :nth-child(2) {
    margin-top: -3px;
   }
`

const UpCaret = styled.i`
   width: 0;
   margin-left: 69px;
   border: 15px solid transparent;
   border-bottom: 18px solid #b0b0b0;
   border-top: 0;
`

const ActionCell = styled.div`
   position: absolute;
   left: ${(p) => p.$left}px;
   top: 25px;
   width: ${(p) => p.$w}px;
   display: flex;
   flex-direction: column;
   align-items: center;
   gap: 15px;
`

const RedDot = styled.i`
   position: absolute;
   left: 102px;
   top: 2px;
   width: 21px;
   height: 21px;
   border-radius: 50%;
   background: #f5342f;
`

const SinaMark = styled.div`
   position: absolute;
   left: 964px;
   top: 57px;
   display: flex;
`

const SinaText = styled.span`
   margin: 29px 0 0 7px;
   font-size: 25px;
   line-height: 1.2;
   font-weight: 500;
   letter-spacing: 8.7px;
   color: #fff;
   white-space: nowrap;
`

const XueqiuMark = styled.div`
   position: absolute;
   left: 933px;
   top: 112px;
   display: flex;
   align-items: center;
`
